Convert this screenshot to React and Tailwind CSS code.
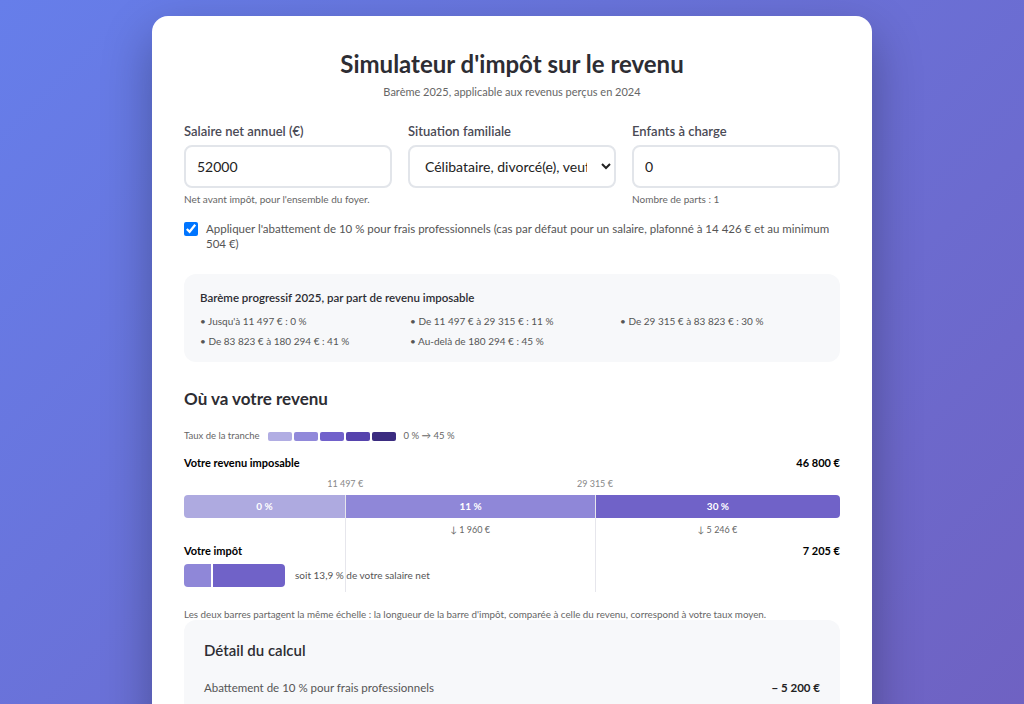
import { useState } from "react";

const fmt = (n) => Math.round(n).toLocaleString("fr-FR").replace(/\u202f|\u00a0/g, " ");

const tranches = [
  "Jusqu'à 11 497 € : 0 %",
  "De 11 497 € à 29 315 € : 11 %",
  "De 29 315 € à 83 823 € : 30 %",
  "De 83 823 € à 180 294 € : 41 %",
  "Au-delà de 180 294 € : 45 %",
];

const swatches = ["bg-[#b1ade3]", "bg-[#9189da]", "bg-[#7161cb]", "bg-[#5643ad]", "bg-[#3b2c80]"];

const details = [
  ["Abattement de 10 % pour frais professionnels", "− 5 200 €"],
  ["Revenu net imposable", "46 800 €"],
  ["Nombre de parts", "1"],
  ["Quotient familial", "46 800 €"],
  ["Impôt brut", "7 205 €"],
  ["Décote", "0 €"],
  ["Impôt net à payer", "7 205 €"],
  ["Taux moyen d'imposition", "13,9 %"],
  ["Taux marginal d'imposition", "30 %"],
];

export default function App() {
  const [salaire, setSalaire] = useState("52000");
  const [enfants, setEnfants] = useState("0");
  const [abattement, setAbattement] = useState(true);

  const revenu = 46800;
  const impot = 7205;
  const pct = (v) => (v / revenu) * 100;

  return (
    <div
      className="min-h-[2100px] bg-[linear-gradient(135deg,#667eea_0%,#764ba2_100%)] px-4 pt-4 pb-10"
      style={{ fontFamily: 'Lato, "Noto Sans", sans-serif' }}
    >
      <div className="mx-auto w-[720px] rounded-2xl bg-white px-8 pt-8 pb-8 shadow-[0_20px_50px_rgba(0,0,0,0.3)]">
        <h1 className="text-center text-[24px] font-bold leading-8 text-[#2d2d33]">
          Simulateur d'impôt sur le revenu
        </h1>
        <p className="mt-1 text-center text-[11px] leading-4 text-[#666]">
          Barème 2025, applicable aux revenus perçus en 2024
        </p>

        <div className="mt-[23px] grid grid-cols-3 gap-4">
          <div>
            <label className="block text-[13px] font-semibold leading-4 text-[#4a4a55]">Salaire net annuel (€)</label>
            <input
              value={salaire}
              onChange={(e) => setSalaire(e.target.value)}
              className="mt-[6px] h-[43px] w-full rounded-lg border-2 border-[#e2e5ea] px-[11px] text-[14px] text-[#222] outline-none"
            />
            <p className="mt-1 text-[10px] leading-[14px] text-[#666]">Net avant impôt, pour l'ensemble du foyer.</p>
          </div>
          <div>
            <label className="block text-[13px] font-semibold leading-4 text-[#4a4a55]">Situation familiale</label>
            <select className="mt-[6px] h-[43px] w-full rounded-lg border-2 border-[#e2e5ea] bg-white px-[11px] text-[14px] text-[#222] outline-none">
              <option>Célibataire, divorcé(e), veuf(ve)</option>
              <option>Marié(e) ou pacsé(e)</option>
            </select>
          </div>
          <div>
            <label className="block text-[13px] font-semibold leading-4 text-[#4a4a55]">Enfants à charge</label>
            <input
              value={enfants}
              onChange={(e) => setEnfants(e.target.value)}
              className="mt-[6px] h-[43px] w-full rounded-lg border-2 border-[#e2e5ea] px-[11px] text-[14px] text-[#222] outline-none"
            />
            <p className="mt-1 text-[10px] leading-[14px] text-[#666]">Nombre de parts : 1</p>
          </div>
        </div>

        <label className="mt-[15px] flex items-start gap-2 text-[11.5px] leading-[15px] text-[#555]">
          <input
            type="checkbox"
            checked={abattement}
            onChange={(e) => setAbattement(e.target.checked)}
            className="mt-[1px] h-[14px] w-[14px] shrink-0 accent-[#0075ff]"
          />
          <span>
            Appliquer l'abattement de 10 % pour frais professionnels (cas par défaut pour un salaire, plafonné à 14 426 € et au minimum 504 €)
          </span>
        </label>

        <div className="mt-[23px] rounded-xl bg-[#f7f8fa] px-4 pt-4 pb-[14px]">
          <h3 className="text-[11.5px] font-semibold leading-4 text-[#2d2d33]">Barème progressif 2025, par part de revenu imposable</h3>
          <div className="mt-2 grid grid-cols-3 gap-x-1.5 gap-y-1.5 text-[10px] leading-[14px] text-[#555]">
            {tranches.map((t) => (
              <div key={t}>• {t}</div>
            ))}
          </div>
        </div>

        <h2 className="mt-[25px] text-[17px] font-bold leading-6 text-[#2d2d33]">Où va votre revenu</h2>

        <div className="mt-[18px] flex h-[14px] items-center gap-2 text-[9.5px] text-[#666]">
          <span>Taux de la tranche</span>
          <div className="flex gap-[2px]">
            {swatches.map((s) => (
              <span key={s} className={`h-[9px] w-[24px] rounded-[2px] ${s}`} />
            ))}
          </div>
          <span>0 % → 45 %</span>
        </div>

        <div className="mt-3 flex justify-between text-[11px] font-bold leading-4 text-black">
          <span>Votre revenu imposable</span>
          <span>{fmt(revenu)} €</span>
        </div>

        <div className="relative mt-[7px]">
          <div className="relative h-[12px] text-[9px] leading-[12px] text-[#888]">
            <span className="absolute -translate-x-1/2" style={{ left: `${pct(11497)}%` }}>11 497 €</span>
            <span className="absolute -translate-x-1/2" style={{ left: `${pct(29315)}%` }}>29 315 €</span>
          </div>
          <div className="mt-[5px] flex h-[23px] overflow-hidden rounded-[4px] text-[10px] font-bold text-white">
            <div className="flex items-center justify-center bg-[#aeaae0]" style={{ width: `${pct(11497)}%` }}>0 %</div>
            <div className="flex items-center justify-center border-l border-white bg-[#8f87d8]" style={{ width: `${pct(29315 - 11497)}%` }}>11 %</div>
            <div className="flex flex-1 items-center justify-center border-l border-white bg-[#7062c8]">30 %</div>
          </div>
          <div className="flex h-[24px] items-center text-[9px] text-[#666]">
            <div style={{ width: `${pct(11497)}%` }} />
            <div className="text-center" style={{ width: `${pct(29315 - 11497)}%` }}>↓ 1 960 €</div>
            <div className="flex-1 text-center">↓ 5 246 €</div>
          </div>

          <div className="mt-[1px] flex justify-between text-[11px] font-bold leading-4 text-black">
            <span>Votre impôt</span>
            <span>{fmt(impot)} €</span>
          </div>
          <div className="mt-[5px] flex items-center">
            <div className="flex h-[23px] overflow-hidden rounded-[4px]" style={{ width: `${pct(impot)}%` }}>
              <div className="bg-[#8f87d8]" style={{ width: `${(1960 / impot) * 100}%` }} />
              <div className="flex-1 border-l-2 border-white bg-[#7062c8]" />
            </div>
            <span className="ml-[10px] text-[10px] text-[#555]">soit 13,9 % de votre salaire net</span>
          </div>
          <div className="h-[5px]" />

          <div className="pointer-events-none absolute top-[17px] bottom-0 w-px bg-[#e6e6ec]" style={{ left: `${pct(11497)}%` }} />
          <div className="pointer-events-none absolute top-[17px] bottom-0 w-px bg-[#e6e6ec]" style={{ left: `${pct(29315)}%` }} />
        </div>

        <p className="mt-4 text-[9.8px] leading-[12px] text-[#666]">
          Les deux barres partagent la même échelle : la longueur de la barre d'impôt, comparée à celle du revenu, correspond à votre taux moyen.
        </p>

        <div className="rounded-xl bg-[#f7f8fa] px-5 pt-5 pb-5">
          <h3 className="text-[15px] font-semibold leading-5 text-[#2d2d33]">Détail du calcul</h3>
          <div className="mt-5 flex flex-col gap-3">
            {details.map(([k, v]) => (
              <div key={k} className="flex justify-between text-[11.5px] leading-4">
                <span className="text-[#555]">{k}</span>
                <span className="font-bold text-[#222]">{v}</span>
              </div>
            ))}
          </div>
        </div>
      </div>
    </div>
  );
}
